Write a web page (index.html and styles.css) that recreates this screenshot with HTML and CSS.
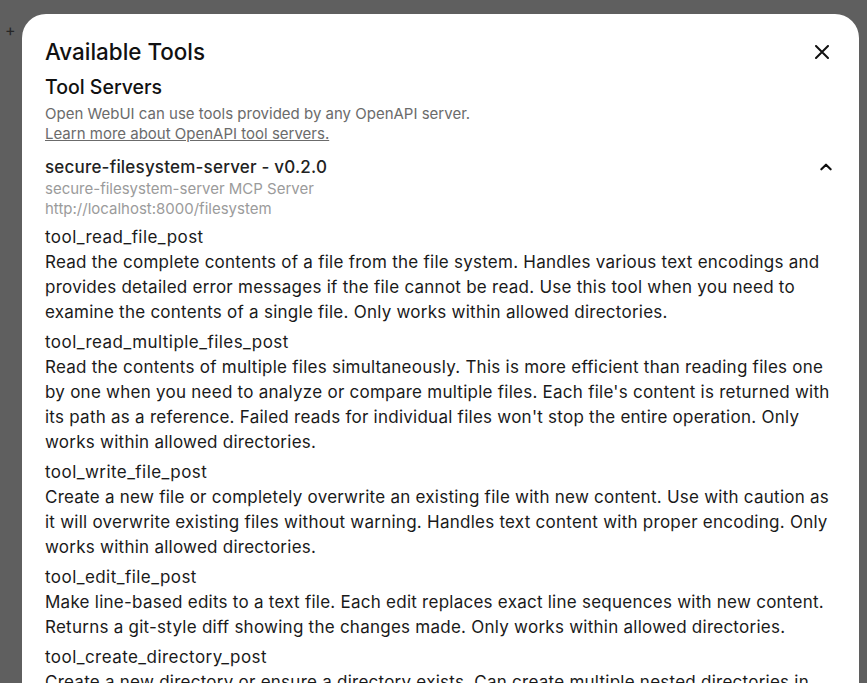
FILE: index.html
```html
<!DOCTYPE html>
<html lang="en">
<head>
<meta charset="utf-8">
<title>Available Tools</title>
<link rel="stylesheet" href="styles.css">
</head>
<body>
<div class="page">
  <span class="plus">+</span>
</div>
<div class="overlay">
  <div class="modal">
    <div class="modal-header">
      <h1 class="title">Available Tools</h1>
      <button class="close" aria-label="Close">
        <svg width="14" height="14" viewBox="0 0 14 14"><path d="M1 1L13 13M13 1L1 13" stroke="#111" stroke-width="2" stroke-linecap="round" fill="none"/></svg>
      </button>
    </div>
    <h2 class="section-title">Tool Servers</h2>
    <div class="section-desc">
      <div>Open WebUI can use tools provided by any OpenAPI server.</div>
      <a class="link" href="#">Learn more about OpenAPI tool servers.</a>
    </div>
    <div class="server">
      <div class="server-head">
        <div class="server-name">secure-filesystem-server - v0.2.0</div>
        <svg class="chevron" width="16" height="16" viewBox="0 0 24 24"><path d="M5 15.5l7-7 7 7" stroke="#111" stroke-width="3.2" stroke-linecap="round" stroke-linejoin="round" fill="none"/></svg>
      </div>
      <div class="server-meta">secure-filesystem-server MCP Server</div>
      <div class="server-meta">http://localhost:8000/filesystem</div>
    </div>
    <div class="tools">
      <div class="tool">
        <div class="tool-name">tool_read_file_post</div>
        <div class="tool-desc">Read the complete contents of a file from the file system. Handles various text encodings and provides detailed error messages if the file cannot be read. Use this tool when you need to examine the contents of a single file. Only works within allowed directories.</div>
      </div>
      <div class="tool">
        <div class="tool-name">tool_read_multiple_files_post</div>
        <div class="tool-desc">Read the contents of multiple files simultaneously. This is more efficient than reading files one by one when you need to analyze or compare multiple files. Each file's content is returned with its path as a reference. Failed reads for individual files won't stop the entire operation. Only works within allowed directories.</div>
      </div>
      <div class="tool">
        <div class="tool-name">tool_write_file_post</div>
        <div class="tool-desc">Create a new file or completely overwrite an existing file with new content. Use with caution as it will overwrite existing files without warning. Handles text content with proper encoding. Only works within allowed directories.</div>
      </div>
      <div class="tool">
        <div class="tool-name">tool_edit_file_post</div>
        <div class="tool-desc">Make line-based edits to a text file. Each edit replaces exact line sequences with new content. Returns a git-style diff showing the changes made. Only works within allowed directories.</div>
      </div>
      <div class="tool">
        <div class="tool-name">tool_create_directory_post</div>
        <div class="tool-desc">Create a new directory or ensure a directory exists. Can create multiple nested directories in one operation. If the directory already exists, this operation will succeed silently. Only works within allowed directories.</div>
      </div>
    </div>
  </div>
</div>
</body>
</html>
```

FILE: styles.css
```css
* { box-sizing: border-box; }
html, body { margin: 0; padding: 0; }
body {
  width: 867px;
  height: 683px;
  overflow: hidden;
  background: #5f5f5f;
  font-family: Inter, "Noto Sans", sans-serif;
  color: #1a1a1a;
  position: relative;
}
.page {
  padding: 20px 0 0 5px;
}
.plus {
  font-size: 16px;
  line-height: 20px;
  color: #262626;
}
.overlay {
  position: absolute;
  inset: 0;
  padding: 14px 8px 0 22px;
}
.modal {
  width: 837px;
  height: 700px;
  background: #fff;
  border-radius: 24px;
  padding: 24px 23px 0 23px;
  overflow: hidden;
}
.modal-header {
  display: flex;
  justify-content: space-between;
  align-items: center;
}
.title {
  margin: 0;
  font-size: 22.4px;
  line-height: 28px;
  font-weight: 500;
  color: #111;
}
.close {
  border: 0;
  background: none;
  padding: 0;
  margin-right: 7px;
  width: 14px;
  height: 14px;
  display: flex;
}
.section-title {
  margin: 8px 0 0;
  font-size: 19.5px;
  line-height: 26px;
  font-weight: 500;
  color: #111;
}
.section-desc {
  margin-top: 4px;
  font-size: 15px;
  line-height: 20px;
  color: #6b6b6b;
}
.link {
  color: #6b6b6b;
  text-decoration: underline;
}
.server {
  margin-top: 11px;
}
.server-head {
  display: flex;
  justify-content: space-between;
  align-items: center;
}
.server-name {
  font-size: 17px;
  line-height: 24px;
  letter-spacing: 0.2px;
  font-weight: 500;
  color: #222;
}
.chevron {
  margin-right: 2px;
}
.server-meta {
  font-size: 15px;
  line-height: 20px;
  color: #9b9b9b;
}
.tools {
  margin-top: 6px;
  display: flex;
  flex-direction: column;
  gap: 5px;
}
.tool-name, .tool-desc {
  font-size: 17px;
  line-height: 25px;
  color: #1a1a1a;
}
.tool-name {
  letter-spacing: 0.45px;
}
.tool-desc {
  letter-spacing: 0.25px;
}
```
